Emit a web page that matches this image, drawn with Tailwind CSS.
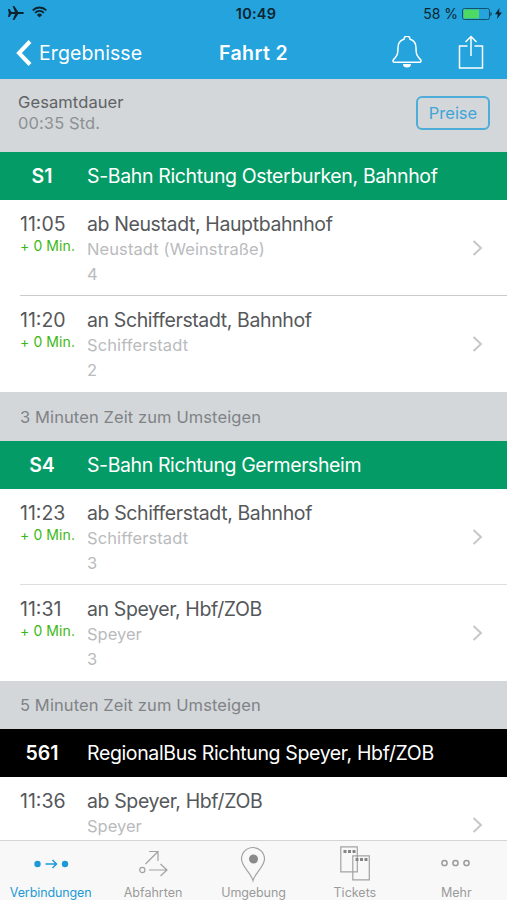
<!DOCTYPE html>
<html lang="de">
<head>
    <meta charset="UTF-8">
    <meta name="viewport" content="width=device-width, initial-scale=1.0">
    <title>Fahrt 2</title>
    <script src="https://cdn.jsdelivr.net/npm/@tailwindcss/browser@4"></script>
</head>
<body class="bg-white font-['Inter',sans-serif] text-[#55585a]">
    <div class="w-[507px] h-[900px] flex flex-col overflow-hidden">

        <!-- Header -->
        <header class="h-[79px] shrink-0 bg-[#24a3dc] text-white">
            <!-- Status bar -->
            <div class="h-[27px] grid grid-cols-3 items-center pl-2 pr-[5px] text-[#0b2430]">
                <div class="flex items-center gap-2">
                    <svg class="-mt-px" width="16" height="14" viewBox="0 0 16 14" fill="#0b2430"><path d="M0 3h1.500L3.500 6H7L4.600 0h1.700l4 6H14c1.300 0 2 .5 2 1s-.7 1-2 1h-3.700l-4 6H4.600L7 8H3.500l-2 3H0l.8-4z"/></svg>
                    <svg class="-mt-[3px]" width="15" height="12" viewBox="0 0 15 12" fill="none" stroke="#0b2430" stroke-width="1.800"><path d="M.7 4.300a9.600 9.600 0 0 1 13.600 0M3.100 6.800a6.200 6.200 0 0 1 8.800 0"/><path d="M7.500 11.500 4.900 8.900a3.700 3.700 0 0 1 5.200 0z" fill="#0b2430" stroke="none"/></svg>
                </div>
                <div class="text-center text-[14.500px] font-semibold tracking-[0.2px] pl-0.5">10:49</div>
                <div class="flex items-center justify-end">
                    <span class="text-[14px] mr-1 whitespace-nowrap">58 %</span>
                    <svg width="30" height="12" viewBox="0 0 30 12"><rect x=".5" y=".5" width="27" height="11" rx="2" fill="none" stroke="#12516e"/><path d="M1.500 1.500H17v9H1.500z" fill="#4cd964"/><path d="M28.500 4c1.500.5 1.500 3.500 0 4z" fill="#0b2430"/></svg>
                    <svg class="ml-[3px]" width="7" height="11" viewBox="0 0 7 11" fill="#0b2430"><path d="M4.500 0 0 6.200h2.800L2 11l5-6.500H4z"/></svg>
                </div>
            </div>
            <!-- Navigation -->
            <div class="h-[52px] flex items-center pl-4 pr-[23px]">
                <div class="w-[203px] flex items-center gap-[7px]">
                    <svg width="16" height="26" viewBox="0 0 16 26" fill="none" stroke="white" stroke-width="4"><path d="M14 1.500 3 13l11 11.500"/></svg>
                    <span class="text-[19.500px] pt-px tracking-[0.1px]">Ergebnisse</span>
                </div>
                <h1 class="text-[19.500px] font-semibold whitespace-nowrap pt-px tracking-[0.4px]">Fahrt 2</h1>
                <div class="ml-auto flex items-center gap-[36px] -mt-[3px]">
                    <svg width="30" height="32" viewBox="0 0 30 32" fill="none" stroke="white" stroke-width="1.500" stroke-linejoin="round"><path d="M12 3.200a3 3 0 0 1 6 0c4.200 1.300 6 4.300 6 8.300 0 3.500.3 6.500 1.300 8 .8 1.500 1.800 2.700 3 3.900 1.200 1.200.8 2.900-.7 2.900H2.400c-1.500 0-1.900-1.700-.7-2.900 1.200-1.200 2.200-2.400 3-3.900 1-1.500 1.300-4.500 1.300-8 0-4 1.800-7 6-8.300z"/><path d="M11 28h8a4 3.500 0 0 1-8 0z" fill="white" stroke="none"/></svg>
                    <svg width="26" height="34" viewBox="0 0 26 34" fill="none" stroke="white" stroke-width="1.500"><path d="M9.500 11H1.500v22h23V11h-8M13 21V1.500M7.500 7 13 1.500 18.500 7"/></svg>
                </div>
            </div>
        </header>

        <main class="flex-1 min-h-0 overflow-hidden">
            <!-- Total duration -->
            <section class="h-[73px] bg-[#d3d7da] flex items-center justify-between pl-[18px] pr-[17px]">
                <div class="text-[16.500px] leading-[21px] pb-[6px] tracking-[0.1px]">
                    <div class="text-[#606366]">Gesamtdauer</div>
                    <div class="text-[#8d9093]">00:35 Std.</div>
                </div>
                <button class="w-[74px] h-[34px] mb-[6px] pt-px border-2 border-[#4fadd9] rounded-md text-[16.500px] text-[#3fa5d8]">Preise</button>
            </section>

            <!-- S1 -->
            <div class="h-12 bg-[#049b66] text-white flex items-center text-[19.500px] pt-0.5">
                <span class="w-[87px] text-center font-semibold pr-[3px]">S1</span>
                <span class="tracking-[-0.36px]">S-Bahn Richtung Osterburken, Bahnhof</span>
            </div>
            <div class="h-[95px] flex pt-[12px]">
                <div class="w-[67px] ml-5">
                    <div class="text-[19.500px] leading-[25px]">11:05</div>
                    <div class="text-[14px] leading-[18px] text-[#3cb814] whitespace-nowrap tracking-[0.1px]">+ 0 Min.</div>
                </div>
                <div class="flex-1">
                    <div class="text-[19.500px] leading-[25px] tracking-[-0.39px]">ab Neustadt, Hauptbahnhof</div>
                    <div class="text-[16.500px] leading-[24px] text-[#b9bbbd] tracking-[0.1px]">Neustadt (Weinstraße)</div>
                    <div class="text-[16.500px] leading-[26px] text-[#b9bbbd]">4</div>
                </div>
                <svg class="mt-[28px] mr-[24px]" width="11" height="16" viewBox="0 0 11 16" fill="none" stroke="#c5c7c9" stroke-width="2"><path d="m1.500 1 7.500 7-7.500 7"/></svg>
            </div>
            <div class="h-[97px] ml-5 flex pt-[12px] border-t border-[#c9cccf]">
                <div class="w-[67px]">
                    <div class="text-[19.500px] leading-[25px]">11:20</div>
                    <div class="text-[14px] leading-[18px] text-[#3cb814] whitespace-nowrap tracking-[0.1px]">+ 0 Min.</div>
                </div>
                <div class="flex-1">
                    <div class="text-[19.500px] leading-[25px] tracking-[-0.39px]">an Schifferstadt, Bahnhof</div>
                    <div class="text-[16.500px] leading-[24px] text-[#b9bbbd] tracking-[0.1px]">Schifferstadt</div>
                    <div class="text-[16.500px] leading-[26px] text-[#b9bbbd]">2</div>
                </div>
                <svg class="mt-[28px] mr-[24px]" width="11" height="16" viewBox="0 0 11 16" fill="none" stroke="#c5c7c9" stroke-width="2"><path d="m1.500 1 7.500 7-7.500 7"/></svg>
            </div>
            <div class="h-[49px] bg-[#d3d7da] pl-5 pt-px flex items-center text-[16.500px] text-[#808386] tracking-[0.1px]">3 Minuten Zeit zum Umsteigen</div>

            <!-- S4 -->
            <div class="h-12 bg-[#049b66] text-white flex items-center text-[19.500px] pt-0.5">
                <span class="w-[87px] text-center font-semibold pr-[3px]">S4</span>
                <span class="tracking-[-0.4px]">S-Bahn Richtung Germersheim</span>
            </div>
            <div class="h-[95px] flex pt-[12px]">
                <div class="w-[67px] ml-5">
                    <div class="text-[19.500px] leading-[25px]">11:23</div>
                    <div class="text-[14px] leading-[18px] text-[#3cb814] whitespace-nowrap tracking-[0.1px]">+ 0 Min.</div>
                </div>
                <div class="flex-1">
                    <div class="text-[19.500px] leading-[25px] tracking-[-0.39px]">ab Schifferstadt, Bahnhof</div>
                    <div class="text-[16.500px] leading-[24px] text-[#b9bbbd] tracking-[0.1px]">Schifferstadt</div>
                    <div class="text-[16.500px] leading-[26px] text-[#b9bbbd]">3</div>
                </div>
                <svg class="mt-[28px] mr-[24px]" width="11" height="16" viewBox="0 0 11 16" fill="none" stroke="#c5c7c9" stroke-width="2"><path d="m1.500 1 7.500 7-7.500 7"/></svg>
            </div>
            <div class="h-[97px] ml-5 flex pt-[12px] border-t border-[#dcdedf]">
                <div class="w-[67px]">
                    <div class="text-[19.500px] leading-[25px]">11:31</div>
                    <div class="text-[14px] leading-[18px] text-[#3cb814] whitespace-nowrap tracking-[0.1px]">+ 0 Min.</div>
                </div>
                <div class="flex-1">
                    <div class="text-[19.500px] leading-[25px] tracking-[-0.39px]">an Speyer, Hbf/ZOB</div>
                    <div class="text-[16.500px] leading-[24px] text-[#b9bbbd]">Speyer</div>
                    <div class="text-[16.500px] leading-[26px] text-[#b9bbbd]">3</div>
                </div>
                <svg class="mt-[28px] mr-[24px]" width="11" height="16" viewBox="0 0 11 16" fill="none" stroke="#c5c7c9" stroke-width="2"><path d="m1.500 1 7.500 7-7.500 7"/></svg>
            </div>
            <div class="h-12 bg-[#d3d7da] pl-5 flex items-center text-[16.500px] text-[#808386] tracking-[0.1px]">5 Minuten Zeit zum Umsteigen</div>

            <!-- Bus 561 -->
            <div class="h-12 bg-black text-white flex items-center text-[19.500px] pt-0.5">
                <span class="w-[87px] text-center font-semibold pr-[3px]">561</span>
                <span class="tracking-[-0.37px]">RegionalBus Richtung Speyer, Hbf/ZOB</span>
            </div>
            <div class="h-24 flex pt-[12px]">
                <div class="w-[67px] ml-5">
                    <div class="text-[19.500px] leading-[25px]">11:36</div>
                </div>
                <div class="flex-1">
                    <div class="text-[19.500px] leading-[25px] tracking-[-0.39px]">ab Speyer, Hbf/ZOB</div>
                    <div class="text-[16.500px] leading-[24px] text-[#b9bbbd]">Speyer</div>
                </div>
                <svg class="mt-[28px] mr-[24px]" width="11" height="16" viewBox="0 0 11 16" fill="none" stroke="#c5c7c9" stroke-width="2"><path d="m1.500 1 7.500 7-7.500 7"/></svg>
            </div>
        </main>

        <!-- Tab bar -->
        <nav class="h-[60px] shrink-0 bg-[#f8f8f8] border-t border-[#d4d4d4] grid grid-cols-5 text-[12.500px] text-[#9b9b9b] text-center">
            <div class="flex flex-col items-center text-[#1d9ad6]">
                <svg width="36" height="43" viewBox="0 0 36 43" fill="none" stroke="#1d9ad6" stroke-width="1.500"><circle cx="4.500" cy="23" r="3.200" fill="#1d9ad6" stroke="none"/><circle cx="32" cy="23" r="3.200" fill="#1d9ad6" stroke="none"/><path d="M12.500 23h11M19.500 19l4 4-4 4"/></svg>
                <span class="leading-4 pt-px tracking-[-0.1px]">Verbindungen</span>
            </div>
            <div class="flex flex-col items-center pl-0.5">
                <svg width="30" height="43" viewBox="0 0 30 43" fill="none" stroke="#a2a2a2" stroke-width="1.200"><circle cx="4.300" cy="29" r="2.600"/><path d="M11 29h18M22.500 23l6.500 6-6.500 6M7.500 23 20 10.500M11 10.500h9V20"/></svg>
                <span class="leading-4 pt-px">Abfahrten</span>
            </div>
            <div class="flex flex-col items-center">
                <svg width="26" height="43" viewBox="0 0 26 43"><path d="M13 39.500C10.500 31 1.500 25.500 1.500 18a11.500 11.500 0 0 1 23 0C24.500 25.500 15.500 31 13 39.500z" fill="none" stroke="#a2a2a2" stroke-width="1.200"/><circle cx="13.500" cy="18" r="4.500" fill="#8a8a8a"/></svg>
                <span class="leading-4 pt-px tracking-[-0.1px]">Umgebung</span>
            </div>
            <div class="flex flex-col items-center">
                <svg width="30" height="43" viewBox="0 0 30 43" fill="#f8f8f8" stroke="#a2a2a2" stroke-width="1.200"><path d="M.8 5.800h16.500v25H.8zM12.800 14.800h16.500v24H12.800z"/><path d="M3.500 10.500h12M15.500 18.500h12" stroke="#858585" stroke-width="3" stroke-dasharray="3 1.500"/></svg>
                <span class="leading-4 pt-px">Tickets</span>
            </div>
            <div class="flex flex-col items-center">
                <svg width="30" height="43" viewBox="0 0 30 43" fill="none" stroke="#9b9b9b" stroke-width="1.500"><circle cx="3.500" cy="22" r="2.600"/><circle cx="14.500" cy="22" r="2.600"/><circle cx="25.500" cy="22" r="2.600"/></svg>
                <span class="leading-4 pt-px">Mehr</span>
            </div>
        </nav>
    </div>
</body>
</html>
